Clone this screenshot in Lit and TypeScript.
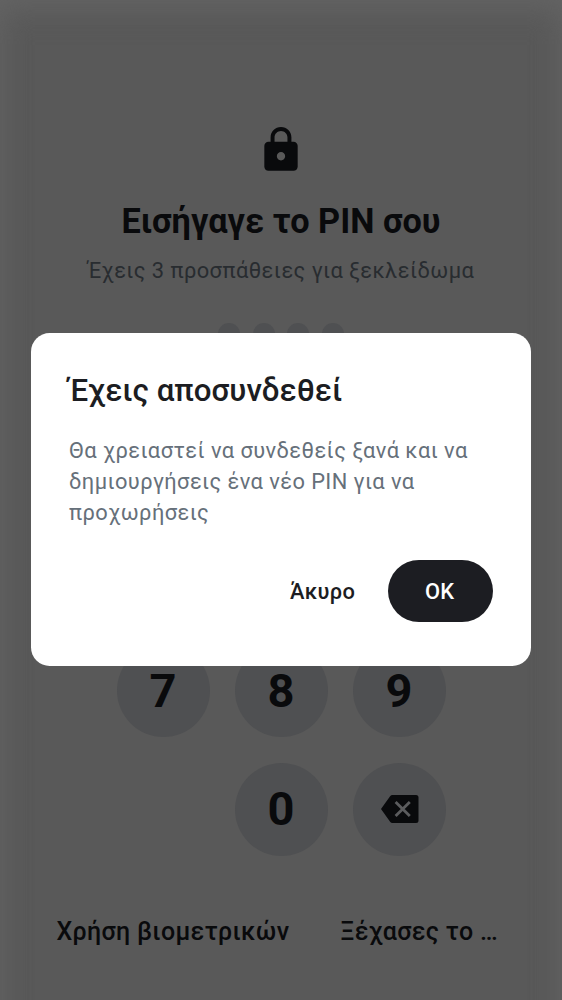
import { LitElement, html, css } from "lit";
import { customElement } from "lit/decorators.js";

@customElement("pin-dialog")
class PinDialog extends LitElement {
  static styles = css`
    :host {
      display: block;
      box-sizing: border-box;
      width: 500px;
      height: 333px;
      padding: 39px 38px 0 38px;
      border-radius: 18.7px;
      background: #fff;
    }
    .title {
      margin: 0;
      font-size: 31.22px;
      line-height: 38px;
      font-weight: 500;
      letter-spacing: 0.03px;
      color: #1c1d22;
      white-space: nowrap;
    }
    .body {
      margin: 25px 0 0;
      font-size: 21.85px;
      line-height: 31.22px;
      letter-spacing: 0.43px;
      color: #66707a;
      white-space: nowrap;
    }
    .actions {
      display: flex;
      justify-content: flex-end;
      margin-top: 31px;
    }
    .button {
      box-sizing: border-box;
      height: 62.4px;
      padding: 1px 0 0;
      border: 0;
      border-radius: 32px;
      background: none;
      font: 500 21.85px/61.4px Roboto, sans-serif;
      letter-spacing: 0.3px;
      color: #1c1d22;
      width: 130px;
    }
    .primary {
      width: 105.5px;
      padding-right: 1px;
      background: #1c1d22;
      color: #fff;
    }
  `;
  render() {
    return html`
      <h2 class="title">Έχεις αποσυνδεθεί</h2>
      <p class="body">Θα χρειαστεί να συνδεθείς ξανά και να<br />δημιουργήσεις ένα νέο PIN για να<br />προχωρήσεις</p>
      <div class="actions">
        <button class="button">Άκυρο</button>
        <button class="button primary">OK</button>
      </div>
    `;
  }
}

@customElement("app-root")
class AppRoot extends LitElement {
  static styles = css`
    :host {
      display: block;
      position: relative;
      width: 562px;
      height: 1000px;
      overflow: hidden;
      background: #595959;
      color: #090a0c;
      font-family: Roboto, sans-serif;
    }
    .screen {
      display: flex;
      flex-direction: column;
      align-items: center;
      box-sizing: border-box;
      height: 1060px;
      padding-top: 125px;
      box-shadow: inset 0 10px 32px -4px #646464, inset 0 0 28px #5e5e5e;
    }
    .lock {
      display: block;
      width: 50px;
      height: 50px;
    }
    .title {
      margin: 26px 0 0;
      font-size: 34.3px;
      line-height: 40px;
      font-weight: 700;
      white-space: nowrap;
    }
    .subtitle {
      margin: 15px 0 0;
      font-size: 21.85px;
      line-height: 30px;
      letter-spacing: 0.45px;
      color: #282c30;
      white-space: nowrap;
    }
    .dots {
      display: flex;
      gap: 12.5px;
      margin-top: 37px;
    }
    .dot {
      width: 21.9px;
      height: 21.9px;
      border-radius: 50%;
      background: #4f5052;
    }
    .keys {
      display: grid;
      grid-template-columns: repeat(3, 93px);
      gap: 25.3px 25px;
      margin-top: 299.5px;
    }
    .key {
      display: flex;
      align-items: center;
      justify-content: center;
      height: 93px;
      border-radius: 50%;
      background: #4f5052;
      font-size: 47px;
      line-height: 93px;
      font-weight: 700;
    }
    .zero {
      line-height: 91px;
      padding-bottom: 2px;
      box-sizing: border-box;
    }
    .blank {
      background: none;
    }
    .erase {
      margin-left: 2px;
    }
    .links {
      display: flex;
      align-self: stretch;
      justify-content: space-between;
      padding: 0 64px 0 56.5px;
      margin-top: 56px;
      font-size: 24.98px;
      line-height: 40px;
      font-weight: 500;
      letter-spacing: 0.34px;
      white-space: nowrap;
    }
    .modal {
      position: absolute;
      left: 31px;
      top: 333px;
    }
  `;
  render() {
    const key = (label: string) => html`<div class="key">${label}</div>`;
    return html`
      <main class="screen">
        <svg class="lock" viewBox="0 0 24 24" fill="#090a0c">
          <path d="M18 8h-1V6c0-2.76-2.24-5-5-5S7 3.240 7 6v2H6c-1.100 0-2 .9-2 2v10c0 1.100.9 2 2 2h12c1.100 0 2-.9 2-2V10c0-1.100-.9-2-2-2zm-6 9c-1.100 0-2-.9-2-2s.9-2 2-2 2 .9 2 2-.9 2-2 2zm3.100-9H8.900V6c0-1.710 1.390-3.100 3.100-3.100s3.100 1.390 3.100 3.100v2z" />
        </svg>
        <h1 class="title">Εισήγαγε το PIN σου</h1>
        <p class="subtitle">Έχεις 3 προσπάθειες για ξεκλείδωμα</p>
        <div class="dots">${[0, 1, 2, 3].map(() => html`<span class="dot"></span>`)}</div>
        <div class="keys">
          ${["7", "8", "9"].map(key)}
          <div class="key blank"></div>
          <div class="key zero">0</div>
          <div class="key">
            <svg class="erase" width="38" height="30" viewBox="0 0 38 30">
              <path d="M11.500 1H35a2.500 2.500 0 0 1 2.500 2.500v23a2.500 2.500 0 0 1-2.500 2.500H11.500q-1.500 0-2.400-1.300L0 15 9.100 2.300Q10 1 11.500 1Z" fill="#090a0c" />
              <path d="M14.600 7.900 28.800 22.100M28.800 7.900 14.600 22.100" fill="none" stroke="#5b5c5e" stroke-width="2.800" />
            </svg>
          </div>
        </div>
        <div class="links"><span>Χρήση βιομετρικών</span><span>Ξέχασες το …</span></div>
      </main>
      <pin-dialog class="modal" role="dialog"></pin-dialog>
    `;
  }
}
